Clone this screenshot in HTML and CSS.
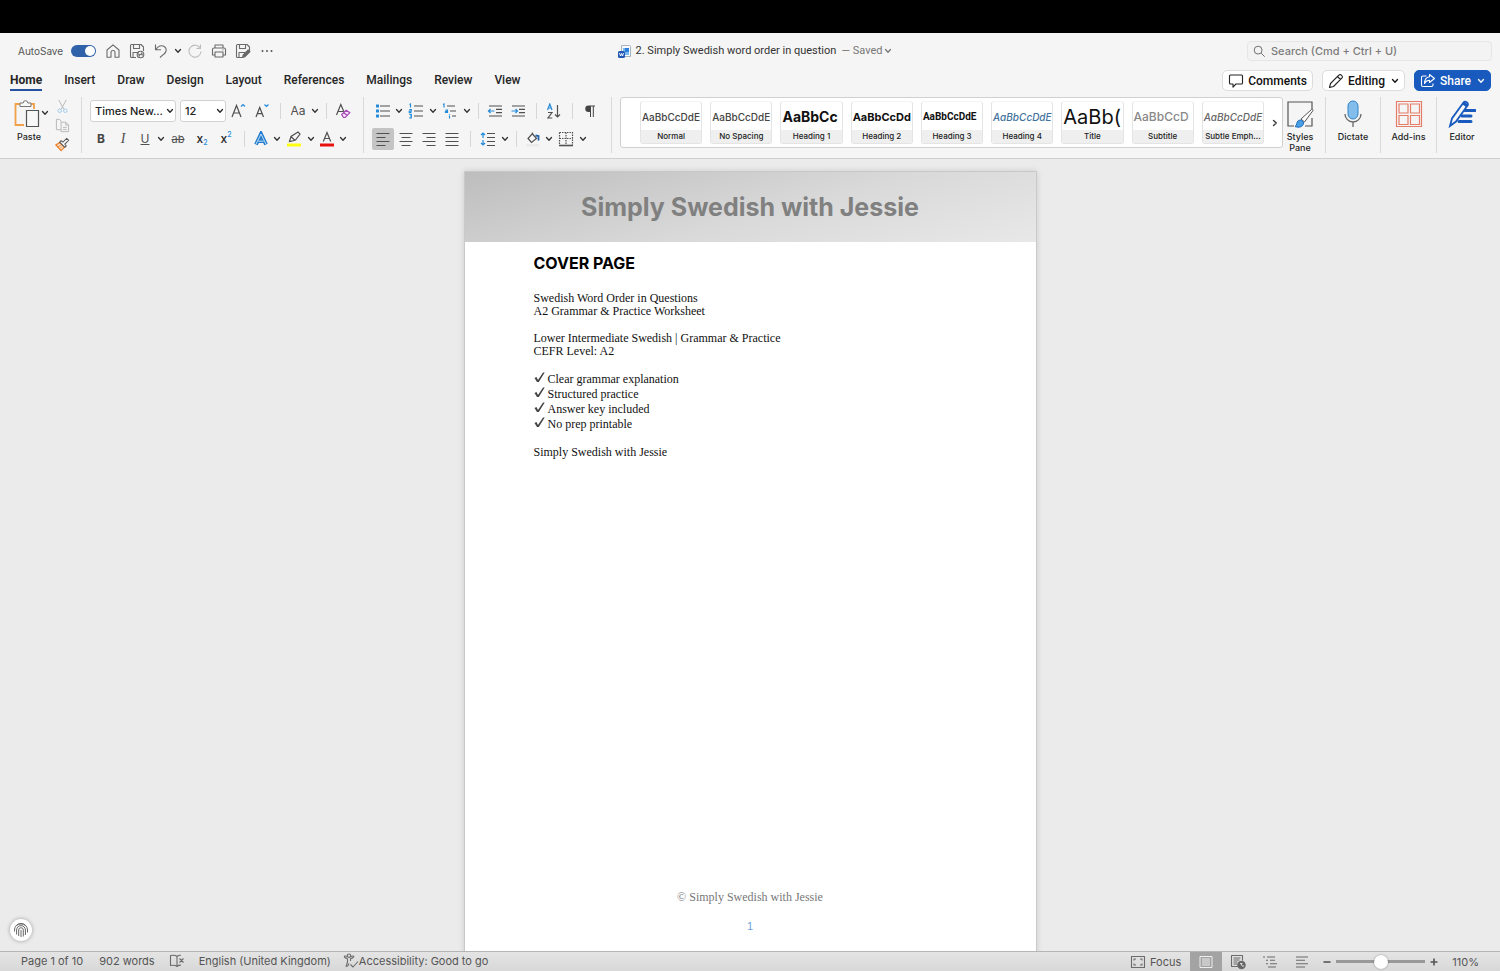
FILE: index.html
```html
<!DOCTYPE html>
<html lang="en">
<head>
<meta charset="utf-8">
<title>2. Simply Swedish word order in question</title>
<link rel="stylesheet" href="styles.css">
</head>
<body>
<svg class="defs" aria-hidden="true">
  <symbol id="chev" viewBox="0 0 8 8"><path d="M1.500 2.500 4 5.300 6.500 2.500" fill="none" stroke="currentColor" stroke-width="1.300" stroke-linecap="round" stroke-linejoin="round"/></symbol>
  <symbol id="floppy" viewBox="0 0 16 16"><path d="M14.500 8V4L12 1.500H2.500a1 1 0 0 0-1 1v11a1 1 0 0 0 1 1H7M4.500 1.500v4h6v-4M4 14.500v-5h6"/></symbol>
</svg>

<div class="screen-top"></div>

<header class="chrome">
  <div class="titlebar">
    <div class="quick">
      <label class="autosave"><span>AutoSave</span><input type="checkbox" class="toggle" checked></label>
      <button class="icon-btn" aria-label="Home"><svg class="i16 line"><path d="M2 7 8 1.800 14 7v7.200h-4V9.500a2 2 0 0 0-4 0v4.700H2z"/></svg></button>
      <button class="icon-btn" aria-label="Save"><svg class="i16 line"><use href="#floppy"/><circle cx="11.500" cy="11.500" r="3.300"/><path d="M9.500 12.500 13.500 10.500M9.500 10.500l1 3M12.500 9.500l1 3"/></svg></button>
      <button class="icon-btn" aria-label="Undo"><svg class="i16 line"><path d="M2.500 1.500v5.300H8M2.700 6.600C5 3 8.500 1.700 11.300 3.500c3 2.200 2.300 5.500-.5 7.700L7 14.500"/></svg></button>
      <button class="chev-btn" aria-label="Undo history"><svg class="i8"><use href="#chev"/></svg></button>
      <button class="icon-btn faded" aria-label="Redo"><svg class="i16 line"><path d="M13.500 1.500V5.500H9.500M13.300 5.300A6 6 0 1 0 14 8.500"/></svg></button>
      <button class="icon-btn" aria-label="Print"><svg class="i16 line"><path d="M4 5V2h8v3M4 12H1.500V6.500A1.500 1.500 0 0 1 3 5h10a1.500 1.500 0 0 1 1.500 1.500V12H12M4 9h8v5H4zM11.500 7h1"/></svg></button>
      <button class="icon-btn" aria-label="Save as"><svg class="i16 line"><use href="#floppy"/><path d="m7.500 14.500.7-2.600 5-5 1.800 1.800-5 5z" fill="#666"/></svg></button>
      <button class="icon-btn" aria-label="More"><svg class="i16"><g fill="#555"><circle cx="3.500" cy="8" r="1"/><circle cx="8" cy="8" r="1"/><circle cx="12.500" cy="8" r="1"/></g></svg></button>
    </div>
    <div class="doc-title">
      <svg width="13" height="13" viewBox="0 0 13 13"><path d="M3.500.5h8a1 1 0 0 1 1 1v10h-9z" fill="#f7fafd" stroke="#a9b1bb"/><path d="M5 3h6v7H5z" fill="#78b8f1"/><path d="M7 3h4v4H7z" fill="#2d7edb"/><rect y="6" width="7" height="7" rx="1.500" fill="#2258b5"/><path d="m1.500 8 1 3 1-2.500 1 2.500 1-3" fill="none" stroke="#fff" stroke-width=".9"/></svg>
      <span>2. Simply Swedish word order in question</span>
      <button class="saved">— Saved <svg class="i8"><use href="#chev"/></svg></button>
    </div>
    <label class="search">
      <svg class="i16 line" viewBox="0 0 16 16"><circle cx="7" cy="7" r="4.500"/><path d="m10.500 10.500 4 4"/></svg>
      <input type="text" placeholder="Search (Cmd + Ctrl + U)" aria-label="Search">
    </label>
  </div>

  <div class="tabbar">
    <nav class="tabs">
      <a href="#" class="active">Home</a><a href="#">Insert</a><a href="#">Draw</a><a href="#">Design</a><a href="#">Layout</a><a href="#">References</a><a href="#">Mailings</a><a href="#">Review</a><a href="#">View</a>
    </nav>
    <div class="actions">
      <button class="pill"><svg class="i16 ink"><path d="M2.500 2h11a1 1 0 0 1 1 1v7a1 1 0 0 1-1 1H8l-3 3.200V11H2.500a1 1 0 0 1-1-1V3a1 1 0 0 1 1-1z"/></svg>Comments</button>
      <button class="pill"><svg class="i16 ink"><path d="m1.500 14.500 1-4 8.300-8.300a1.700 1.700 0 0 1 2.600 0l.4.400a1.700 1.700 0 0 1 0 2.600L5.500 13.500zM9.500 3.500l3 3"/></svg>Editing<svg class="i8"><use href="#chev"/></svg></button>
      <button class="pill share"><svg class="i16 white"><path d="M6.500 3H3a1.500 1.500 0 0 0-1.500 1.500V12A1.500 1.500 0 0 0 3 13.500h8.500A1.500 1.500 0 0 0 13 12v-1.500M9.500 1.500 14.500 5.500 9.500 9.500V7.300C7 7.300 5.700 8.300 4.500 10.500 4.700 6.300 6.500 4 9.500 3.700z"/></svg>Share<svg class="i8"><use href="#chev"/></svg></button>
    </div>
  </div>

  <div class="ribbon">
    <div class="group clipboard">
      <button class="tool paste"><svg width="26" height="28" viewBox="0 0 26 28" fill="none"><path d="M6 4H1.500v21H10M17 4h3v5" stroke="#f2a14a" stroke-width="1.800"/><path d="M6 6.500V3h3.200a2.300 2.300 0 0 1 4.600 0H17v3.500z" fill="#f8f8f8" stroke="#777"/><path d="M12.500 10.500h12v16h-12z" fill="#f8f8f8" stroke="#555" stroke-width="1.200"/></svg>Paste</button>
      <button class="chev-btn" aria-label="Paste options"><svg class="i8"><use href="#chev"/></svg></button>
      <div class="stack">
        <button aria-label="Cut"><svg class="i16" viewBox="0 0 16 16" fill="none"><path d="m4 1 5.500 10M12 1 6.500 11" stroke="#b5b5b5"/><g stroke="#9ccbed"><circle cx="5" cy="12.500" r="1.900"/><circle cx="11" cy="12.500" r="1.900"/></g></svg></button>
        <button aria-label="Copy"><svg class="i16" viewBox="0 0 16 16" fill="none" stroke="#b5b5b5"><path d="M6.500 4V3L4.500 1.500h-3v11h5M6.500 4.500h5l3 3v7h-8zM11.500 4.500v3h3M8.500 10h4M8.500 12.200h4"/></svg></button>
        <button aria-label="Format painter"><svg class="i16" viewBox="0 0 16 16" fill="none"><path d="M5 6 1 8.500 6.500 14.500 10 11z" fill="#fbe0c6" stroke="#ee8530" stroke-width="1.400"/><path d="m3 10.500 3-1.500M5 12.500l2-2" stroke="#ee8530"/><path d="m5 5.500 1.500-1.500 2 1.500 4-4 2 2-4 4 1.500 2-1.500 1.500z" fill="#fff" stroke="#555" stroke-width="1.100"/></svg></button>
      </div>
    </div>

    <div class="group rows">
      <div class="row">
        <span class="pick font"><select aria-label="Font"><option>Times New...</option></select><svg class="i8"><use href="#chev"/></svg></span>
        <span class="pick size"><select aria-label="Font size"><option>12</option></select><svg class="i8"><use href="#chev"/></svg></span>
        <button class="icon-btn" aria-label="Grow font"><svg class="i16 glyph"><path d="M2 14 6.500 2.500 11 14M3.500 10h6"/><path class="blue" d="m11 3.500 2-2 2 2"/></svg></button>
        <button class="icon-btn" aria-label="Shrink font"><svg class="i16 glyph"><path d="M2 14 5.700 4.500 9.500 14M3.300 10.700h5"/><path class="blue" d="m10.500 1.500 2 2 2-2"/></svg></button>
        <i class="sep"></i>
        <button class="icon-btn case">Aa</button>
        <button class="chev-btn" aria-label="Case options"><svg class="i8"><use href="#chev"/></svg></button>
        <i class="sep"></i>
        <button class="icon-btn slim" aria-label="Clear formatting"><svg class="i16 glyph"><path d="M1.500 12 5.800 1.500 9.500 10M3 8.500h5"/><path d="m6.700 11.500 4.500-4.300 3.600 2.500-4.600 4.800H8.500z" fill="#f6e5f8" stroke="#a648b5"/><path d="m8.700 9.700 3.500 2.600" stroke="#a648b5"/></svg></button>
      </div>
      <div class="row">
        <button class="icon-btn slim bold">B</button>
        <button class="icon-btn slim ital">I</button>
        <button class="icon-btn slim under">U</button>
        <button class="chev-btn" aria-label="Underline options"><svg class="i8"><use href="#chev"/></svg></button>
        <button class="icon-btn strike">ab</button>
        <button class="icon-btn script">x<sub>2</sub></button>
        <button class="icon-btn script">x<sup>2</sup></button>
        <i class="sep"></i>
        <button class="icon-btn slim" aria-label="Text effects"><svg class="i16" fill="none"><path d="M3 13.500 8 3l5 10.500M5.300 10.200h5.400" stroke="#2079cd" stroke-width="3.800"/><path d="M3 13.200 8 3l5 10.200M5.300 10.200h5.400" stroke="#d9efff" stroke-width=".9"/></svg></button>
        <button class="chev-btn" aria-label="Effect options"><svg class="i8"><use href="#chev"/></svg></button>
        <button class="icon-btn" aria-label="Highlight"><svg class="i16 glyph"><path d="M1 12.500h14v3H1z" fill="#ffff13" stroke="none"/><path d="m3.500 10.500 1.500-5 7-4.500 2 2-4.500 6-4 1.200zM5 5.800l4 3.500"/></svg></button>
        <button class="chev-btn" aria-label="Highlight options"><svg class="i8"><use href="#chev"/></svg></button>
        <button class="icon-btn slim" aria-label="Font color"><svg class="i16 glyph"><path d="M1 12.500h14v3H1z" fill="#e8110c" stroke="none"/><path d="M4.300 10.500 8 1.500l3.700 9M5.500 7.500h5"/></svg></button>
        <button class="chev-btn" aria-label="Font color options"><svg class="i8"><use href="#chev"/></svg></button>
      </div>
    </div>

    <div class="group rows">
      <div class="row">
        <button class="icon-btn slim" aria-label="Bullets"><svg class="i16 glyph"><path d="M5 3h10M5 8h10M5 13h10"/><path d="M1 1.500h3v3H1zM1 6.500h3v3H1zM1 11.500h3v3H1z" fill="#248bdb" stroke="none"/></svg></button>
        <button class="chev-btn" aria-label="Bullet options"><svg class="i8"><use href="#chev"/></svg></button>
        <button class="icon-btn" aria-label="Numbering"><svg class="i16 glyph"><path d="M6 3h9M6 8h9M6 13h9"/><path class="blue" d="m1.500 1.500 1-.5v3.500M1.300 6.500h2v1.700h-2v1.500h2.200M1.300 11.500h2V13h-1 1v1.800h-2"/></svg></button>
        <button class="chev-btn" aria-label="Numbering options"><svg class="i8"><use href="#chev"/></svg></button>
        <button class="icon-btn" aria-label="Multilevel list"><svg class="i16 glyph"><path d="M5 3h8M8 8h6M10 13h4"/><path class="blue" d="m1 1.500 1-.5v3.500M3.500 7h2v2.500h-2V8.300h2M7.500 12.500v3M7.500 11v.7"/></svg></button>
        <button class="chev-btn" aria-label="List options"><svg class="i8"><use href="#chev"/></svg></button>
        <i class="sep"></i>
        <button class="icon-btn slim" aria-label="Decrease indent"><svg class="i16 glyph"><path d="M2 3h13M9 6.300h6M9 9.700h6M2 13h13"/><path class="blue" d="M7.500 8h-6M3.500 6l-2 2 2 2"/></svg></button>
        <button class="icon-btn" aria-label="Increase indent"><svg class="i16 glyph"><path d="M2 3h13M9 6.300h6M9 9.700h6M2 13h13"/><path class="blue" d="M1.500 8h6M5.500 6l2 2-2 2"/></svg></button>
        <i class="sep"></i>
        <button class="icon-btn" aria-label="Sort"><svg class="i16 glyph"><path class="blue" d="m1.500 7 2.300-6L6 7M2.300 5h3"/><path d="M2 9.500h4L2 15h4.300M11.500 2v12M9 11.500l2.500 2.500 2.500-2.500"/></svg></button>
        <i class="sep"></i>
        <button class="icon-btn" aria-label="Show marks"><svg class="i16"><path d="M13 2.500H6.500a3.200 3.200 0 0 0 0 6.500H8v5h1V3.500h1.800V14h1V3.500H13z" fill="#444"/></svg></button>
      </div>
      <div class="row">
        <button class="icon-btn slim chosen" aria-label="Align left"><svg class="i16 glyph"><path d="M1.500 2.500h13M1.500 6.500h9M1.500 10.500h13M1.500 14.500h9"/></svg></button>
        <button class="icon-btn" aria-label="Center"><svg class="i16 glyph"><path d="M1.500 2.500h13M3.500 6.500h9M1.500 10.500h13M3.500 14.500h9"/></svg></button>
        <button class="icon-btn slim" aria-label="Align right"><svg class="i16 glyph"><path d="M1.500 2.500h13M5.500 6.500h9M1.500 10.500h13M5.500 14.500h9"/></svg></button>
        <button class="icon-btn" aria-label="Justify"><svg class="i16 glyph"><path d="M1.500 2.500h13M1.500 6.500h13M1.500 10.500h13M1.500 14.500h13"/></svg></button>
        <i class="sep"></i>
        <button class="icon-btn" aria-label="Line spacing"><svg class="i16 glyph"><path d="M7 2.500h8M7 6.500h8M7 10.500h8M7 14.500h8"/><path class="blue" d="M3 2v5M1 4l2-2 2 2M3 9v5M1 12l2 2 2-2"/></svg></button>
        <button class="chev-btn" aria-label="Spacing options"><svg class="i8"><use href="#chev"/></svg></button>
        <i class="sep"></i>
        <button class="icon-btn slim" aria-label="Shading"><svg class="i16 glyph"><path d="M1 13h13v2.500H1z" fill="#ebebeb" stroke="none"/><path d="m7.500 3 4 4.500-5 4L3 7.500l4.500-5V1.500"/><path d="m10.500 4.500 3 .5v4.500" stroke="#2463a9" stroke-width="1.800"/></svg></button>
        <button class="chev-btn" aria-label="Shading options"><svg class="i8"><use href="#chev"/></svg></button>
        <button class="icon-btn" aria-label="Borders"><svg class="i16 glyph"><path d="M1.500 1.500h13V14M1.500 1.500V14M8 1.500V14M1.500 7.500h13" stroke-dasharray="1.500 1"/><path d="M1 14.500h14" stroke-width="1.600"/></svg></button>
        <button class="chev-btn" aria-label="Border options"><svg class="i8"><use href="#chev"/></svg></button>
      </div>
    </div>

    <div class="group styles-group">
      <div class="gallery">
        <div class="tiles">
          <button class="tile"><span class="sample">AaBbCcDdE</span><span class="name">Normal</span></button>
          <button class="tile"><span class="sample">AaBbCcDdE</span><span class="name">No Spacing</span></button>
          <button class="tile"><span class="sample h1">AaBbCc</span><span class="name">Heading 1</span></button>
          <button class="tile"><span class="sample h2">AaBbCcDd</span><span class="name">Heading 2</span></button>
          <button class="tile"><span class="sample h3">AaBbCcDdE</span><span class="name">Heading 3</span></button>
          <button class="tile"><span class="sample h4">AaBbCcDdE</span><span class="name">Heading 4</span></button>
          <button class="tile"><span class="sample big">AaBb(</span><span class="name">Title</span></button>
          <button class="tile"><span class="sample sub">AaBbCcD</span><span class="name">Subtitle</span></button>
          <button class="tile"><span class="sample emph">AaBbCcDdE</span><span class="name">Subtle Emph...</span></button>
        </div>
        <button class="chev-btn next" aria-label="More styles"><svg class="i8"><use href="#chev"/></svg></button>
      </div>
      <button class="tool pane"><svg width="28" height="28" viewBox="0 0 28 28" fill="none"><path d="M26 9V2H2v24h6M19 26h7v-8" stroke="#555" stroke-width="1.200"/><path d="M15 19 25.500 9.500c1-.8 2 .3 1.300 1.300L18.500 22z" fill="#fff" stroke="#555"/><path d="M9 26.500c2-1 1.500-4 3-5.500 2-2 5.500-.5 5.500 2 0 4-5 5-8.500 3.500z" fill="#4aa0e6" stroke="#1869b8"/></svg>Styles<br>Pane</button>
    </div>

    <div class="group"><button class="tool"><svg width="28" height="28" viewBox="0 0 28 28" fill="none"><path d="M6 14a8 8 0 0 0 16 0M14 22v5" stroke="#666" stroke-width="1.300"/><rect x="9" y="1" width="10" height="18" rx="5" fill="#83bdec" stroke="#3083c8"/></svg>Dictate</button></div>
    <div class="group"><button class="tool wide"><svg width="28" height="28" viewBox="0 0 28 28" fill="none" stroke="#e47e68" stroke-width="1.200"><path d="M1.500 1.500h25v25h-25zM4 4h9v9H4zM15.500 4h9v9h-9zM4 15.500h9v9H4zM15.500 15.500h9v9h-9z"/></svg>Add-ins</button></div>
    <div class="group"><button class="tool"><svg width="28" height="28" viewBox="0 0 28 28" fill="none"><path d="M17 10.500h10M14 16h9M11 21.500h12" stroke="#185abd" stroke-width="3" stroke-linecap="round"/><path d="M2 26 4 18.500 15.500 2.500c1.700-2 5.500.5 4 3L8 21.500z" fill="#f8f8f8" stroke="#185abd" stroke-width="1.800"/><path d="m14 4 2-2.500 4 3-2 2.500z" fill="#185abd"/></svg>Editor</button></div>
  </div>
</header>

<main class="workspace">
  <article class="page">
    <div class="banner">Simply Swedish with Jessie</div>
    <div class="content">
      <h1>COVER PAGE</h1>
      <p>Swedish Word Order in Questions<br>A2 Grammar &amp; Practice Worksheet</p>
      <p>Lower Intermediate Swedish | Grammar &amp; Practice<br>CEFR Level: A2</p>
      <ul>
        <li><svg width="11" height="12" viewBox="0 0 11 12"><path d="M.5 6 2.500 5 4 8 9 .5h1.700L4.800 10H3z" fill="#444"/></svg>Clear grammar explanation</li>
        <li><svg width="11" height="12" viewBox="0 0 11 12"><path d="M.5 6 2.500 5 4 8 9 .5h1.700L4.800 10H3z" fill="#444"/></svg>Structured practice</li>
        <li><svg width="11" height="12" viewBox="0 0 11 12"><path d="M.5 6 2.500 5 4 8 9 .5h1.700L4.800 10H3z" fill="#444"/></svg>Answer key included</li>
        <li><svg width="11" height="12" viewBox="0 0 11 12"><path d="M.5 6 2.500 5 4 8 9 .5h1.700L4.800 10H3z" fill="#444"/></svg>No prep printable</li>
      </ul>
      <p>Simply Swedish with Jessie</p>
    </div>
    <footer><span>© Simply Swedish with Jessie</span><span class="num">1</span></footer>
  </article>
  <button class="touch" aria-label="Fingerprint"><svg class="i16" viewBox="0 0 16 16" fill="none" stroke="#666"><path d="M3.500 3.500a7 7 0 0 1 9 0M1.500 9.500V8a6.500 6.500 0 0 1 13 0v2.500M3.600 12.500V8a4.400 4.400 0 0 1 8.800 0v5M5.700 14V8a2.300 2.300 0 0 1 4.600 0v6.500M8 8v7"/></svg></button>
</main>

<div class="status">
  <button>Page 1 of 10</button>
  <button class="words">902 words</button>
  <button class="proof" aria-label="Proofing"><svg class="i16 line"><path d="M8 3.500v10M8 3.500C6.500 2 4 2 1.500 2.500v10c2.500-.5 5-.5 6.500 1 1-1 2-1.500 4-1.300M8 3.500c1-1 2.500-1.300 4-1.200M10.500 5.500l4 4M14.500 5.500l-4 4"/></svg></button>
  <button>English (United Kingdom)</button>
  <button class="access"><svg class="i16 line"><circle cx="6" cy="2.700" r="1.700"/><path d="M1.500 4.300c1.500 1 3 1.500 3 1.500V9L3 14M10.500 4.300C9 5.300 7.500 5.800 7.500 5.800V8M1.500 4.300C1 3 2 2.500 4.300 3.500M10.500 4.300c.8-1.300-.3-1.700-2.700-.8M4.500 13.500l1.500-3M7.500 11.500l2.500 2.500 5-5.500"/></svg>Accessibility: Good to go</button>
  <div class="right">
    <button class="focus"><svg class="i16 line"><path d="M1.500 2.500h13v11h-13zM4 6.500v-1.500h2M10 5h2v1.500M12 9.500V11h-2M6 11H4V9.500"/></svg>Focus</button>
    <button class="view on" aria-label="Print layout"><svg class="i16" fill="none" stroke="#eee"><path d="M2 2.500h12v11H2zM4 5h8M4 7h8M4 9h8M4 11h8"/></svg></button>
    <button class="view" aria-label="Web layout"><svg class="i16 line"><path d="M8 12.500H1.500v-11h11v5M3.500 4h7M3.500 6h6M3.500 8h4M3.500 10h4"/><circle cx="11.500" cy="11" r="3.700" fill="#666"/><path d="M10 9.500h2l-1 2M13 11v2" stroke="#ddd"/></svg></button>
    <button class="view" aria-label="Outline"><svg class="i16 line"><path d="M1 3h2M5 3h8M4 6.300h2M8 6.300h5M4 9.700h2M8 9.700h7M6 13h8"/></svg></button>
    <button class="view" aria-label="Draft"><svg class="i16 line"><path d="M2 3h12M2 6.300h9M2 9.700h12M2 13h9"/></svg></button>
    <button class="zoom-btn" aria-label="Zoom out"><svg class="i8"><path d="M.5 4h7" stroke="#555" stroke-width="1.600"/></svg></button>
    <input type="range" min="0" max="100" value="50" aria-label="Zoom">
    <button class="zoom-btn" aria-label="Zoom in"><svg class="i8"><path d="M.5 4h7M4 .5v7" stroke="#555" stroke-width="1.600"/></svg></button>
    <button class="percent">110%</button>
  </div>
</div>
</body>
</html>
```
FILE: styles.css
```css
* { box-sizing: border-box; }
body { margin: 0; height: 100vh; display: flex; flex-direction: column; overflow: hidden; background: #ebebeb; color: #262626; font: 11px/14px Inter, "Liberation Sans", sans-serif; }
button { margin: 0; padding: 0; border: 0; background: none; color: inherit; font: inherit; display: flex; align-items: center; justify-content: center; white-space: nowrap; }
a { color: inherit; text-decoration: none; }
svg { flex: none; display: block; }
.defs { position: absolute; width: 0; height: 0; }
.i16 { width: 16px; height: 16px; }
.i8 { width: 8px; height: 8px; }
.line { fill: none; stroke: #6b6b6b; stroke-width: 1.1; stroke-linejoin: round; }
.ink { fill: none; stroke: #222; stroke-width: 1.1; stroke-linejoin: round; }
.white { fill: none; stroke: #fff; stroke-width: 1.1; stroke-linejoin: round; }
.glyph { fill: none; stroke: #505050; stroke-width: 1.2; }
.glyph .blue { stroke: #248bdb; }

.screen-top { height: 33px; flex: none; background: #000; }
.chrome { flex: none; background: #f5f5f5; border-bottom: 1px solid #cfcfcf; }

.titlebar { display: grid; grid-template-columns: 1fr auto 1fr; align-items: center; height: 36px; padding: 0 8px 0 18px; }
.quick { display: flex; align-items: center; }
.autosave { display: flex; align-items: center; gap: 8px; width: 83px; font-size: 10px; color: #555; justify-content: space-between; padding-right: 5px; }
.toggle { appearance: none; margin: 0; width: 25px; height: 12px; border-radius: 6px; background: #2f62a8; display: flex; justify-content: flex-end; align-items: center; padding: 1px; }
.toggle::after { content: ""; width: 10px; height: 10px; border-radius: 50%; background: #fff; }
.icon-btn { width: 24px; height: 22px; flex: none; }
.slim { width: 22px; }
.chev-btn { width: 10px; height: 22px; flex: none; color: #333; }
.faded { opacity: .4; }
.doc-title { display: flex; align-items: center; gap: 5px; color: #333; font-family: Roboto, sans-serif; font-size: 11px; }
.saved { color: #777; gap: 2px; }
.search { justify-self: end; width: 245px; height: 20px; display: flex; align-items: center; gap: 5px; padding: 0 4px; border: 1px solid #e6e6e6; border-radius: 4px; background: #f3f3f3; }
.search svg { width: 14px; height: 14px; }
.search input { flex: 1; min-width: 0; border: 0; background: none; outline: 0; padding: 0; font: 500 11px/14px Inter, "Liberation Sans", sans-serif; }
.search input::placeholder { color: #7c7c7c; }

.tabbar { display: flex; justify-content: space-between; align-items: flex-start; height: 28px; padding: 0 9px 0 10px; }
.tabs { display: flex; gap: 22px; font: 500 12px/14px Roboto, sans-serif; }
.tabs a { padding: 4px 0 2px; height: 22px; }
.tabs .active { font-weight: 700; border-bottom: 2px solid #2653a0; }
.actions { display: flex; gap: 9px; padding-top: 1px; }
.pill { height: 21px; padding: 0 5px; gap: 4px; border: 1px solid #dcdcdc; border-radius: 5px; background: #fff; color: #111; font: 500 12px/14px Roboto, sans-serif; }
.pill .i8 { margin-left: 2px; }
.share { background: #185abd; border-color: #185abd; color: #fff; }

.ribbon { display: flex; height: 61px; padding-left: 10px; }
.group { display: flex; padding: 0 8px; height: 56px; border-right: 1px solid #dadada; flex: none; }
.clipboard { padding: 0; width: 72px; }
.tool { flex-direction: column; justify-content: flex-start; width: 38px; padding-top: 3px; gap: 1px; font-size: 9px; line-height: 11px; font-weight: 500; }
.tool svg { margin-bottom: 2px; }
.paste svg { margin-right: 4px; }
.wide { width: 39px; }
.group:last-child { border: 0; padding: 0 19px 0 6px; }
.clipboard .chev-btn { height: 32px; width: 8px; margin-left: -7px; }
.clipboard .stack { margin-left: 6px; }
.stack { display: grid; grid-template-rows: repeat(3, 19px); }
.stack svg { width: 15px; height: 15px; }
.rows { flex-direction: column; padding-right: 9px; }
.row { display: flex; align-items: center; height: 28px; }
.sep { width: 12px; height: 16px; flex: none; display: flex; justify-content: center; }
.sep::after { content: ""; width: 1px; background: #d6d6d6; }
.pick { display: flex; align-items: center; position: relative; height: 22px; }
.font { width: 86px; margin-right: 4px; }
.size { width: 46px; }
.pick select { appearance: none; width: 100%; height: 22px; padding: 0 4px; border: 1px solid #d2d2d2; border-radius: 3px; background: #fff; color: #222; font: 500 11px/14px Inter, "Liberation Sans", sans-serif; }
.pick svg { position: absolute; right: 2px; pointer-events: none; }
.case { font-size: 12px; color: #505050; }
.bold { font-size: 12px; font-weight: 700; color: #444; }
.ital { font: italic 14px/16px "Liberation Serif", serif; color: #505050; }
.under { font-size: 12px; text-decoration: underline; color: #505050; }
.strike { text-decoration: line-through; color: #505050; }
.script { font-size: 12px; font-weight: 500; height: 16px; }
.script sub, .script sup { font-size: 7px; line-height: 8px; color: #248bdb; }
.script sub { align-self: flex-end; }
.script sup { align-self: flex-start; }
.chosen { background: #c4c4c4; border-radius: 2px; }

.styles-group { flex: 1 1 0; min-width: 0; }
.gallery { flex: 1; min-width: 0; height: 51px; display: flex; align-items: center; justify-content: space-between; padding: 0 2px 0 19px; border: 1px solid #d0d0d0; border-radius: 3px; background: #fff; }
.tiles { display: flex; gap: 8px; flex: 1; min-width: 0; padding-right: 6px; }
.tile { flex: 1; min-width: 0; height: 43px; flex-direction: column; border: 1px solid #e4e4e4; border-top-color: #f4f4f4; border-radius: 3px; overflow: hidden; }
.sample { width: 100%; height: 29px; padding: 0 1px; line-height: 30px; overflow: hidden; font-size: 10px; font-weight: 500; color: #444; text-align: left; }
.name { width: 100%; height: 13px; background: #efefef; font-size: 8px; line-height: 12px; font-weight: 500; color: #222; }
.h1 { font-size: 14px; font-weight: 700; color: #111; }
.h2 { font-size: 11px; font-weight: 700; color: #111; }
.h3 { font-family: Roboto, sans-serif; font-weight: 700; color: #111; }
.h4 { font-style: italic; color: #41719c; }
.big { font-size: 20px; font-weight: 400; color: #111; }
.sub { font-size: 12px; color: #888; }
.emph { font-style: italic; color: #666; }
.next svg { transform: rotate(-90deg); }
.pane { width: 34px; }

.workspace { flex: 1; min-height: 0; overflow: hidden; position: relative; display: flex; justify-content: center; align-items: flex-start; padding-top: 12px; }
.page { width: 573px; aspect-ratio: 210 / 297; flex: none; display: flex; flex-direction: column; background: #fff; border: 1px solid #c9c9c9; box-shadow: 0 0 6px #0002; }
.banner { padding: 17px 0; text-align: center; font-size: 25px; line-height: 36px; font-weight: 700; color: #808080; background: linear-gradient(165deg, #bdbdbd, #d9d9d9 55%, #e8e8e8); }
.content { flex: 1; padding: 12px 69px; font: 12px/13px "Liberation Serif", serif; color: #111; }
h1 { margin: 0 0 19px; font: 700 16px/19px Inter, "Liberation Sans", sans-serif; color: #000; }
p { margin: 0 0 14px; }
ul { list-style: none; margin: 0 0 14px; padding: 0; line-height: 15px; }
li { display: flex; gap: 3px; }
.page footer { display: flex; flex-direction: column; align-items: center; gap: 16px; padding-bottom: 47px; font: 12px/13px "Liberation Serif", serif; color: #777; }
.num { color: #6ea3d8; font: 11px/13px "Liberation Sans", sans-serif; }
.touch { position: absolute; left: 10px; bottom: 10px; width: 22px; height: 22px; border-radius: 50%; background: #fff; box-shadow: 0 0 4px #0005; }

.status { flex: none; height: 20px; display: flex; align-items: flex-start; padding: 0 21px; border-top: 1px solid #b5b5b5; background: linear-gradient(#e4e4e4, #d8d8d8); color: #555; }
.status button { height: 18px; }
.words { margin-left: 16px; }
.proof { margin: 0 14px; }
.access { margin-left: 12px; }
.right { display: flex; align-items: center; margin-left: auto; }
.focus { gap: 4px; padding-right: 9px; }
.view { width: 32px; }
.status .on { background: #a3a3a3; height: 19px; }
.zoom-btn { width: 18px; }
.status input { appearance: none; width: 89px; height: 14px; margin: 0; background: linear-gradient(#999, #999) center / 100% 3px no-repeat; }
.status input::-webkit-slider-thumb { appearance: none; width: 14px; height: 14px; border-radius: 50%; background: #fff; box-shadow: 0 0 2px #0006; }
.percent { margin-left: 9px; }
```
